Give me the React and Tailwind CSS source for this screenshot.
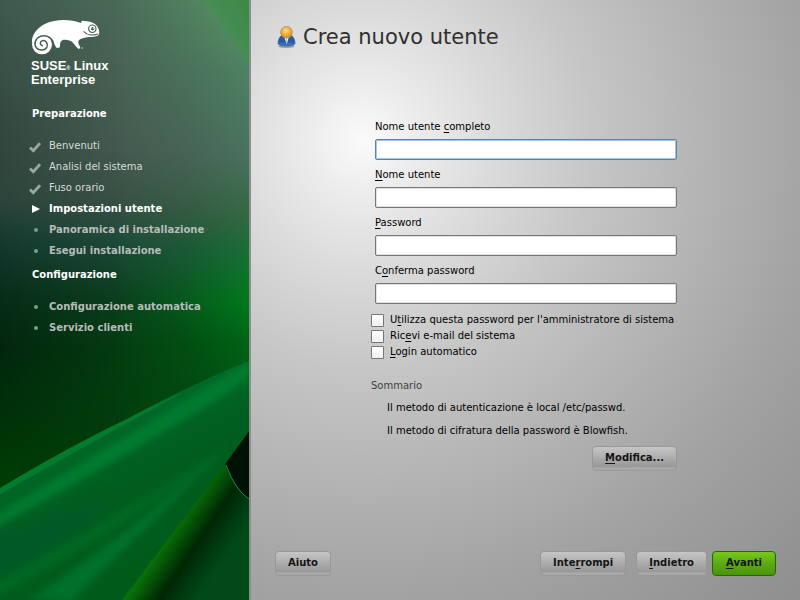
import React from "react";

function Backdrop() {
  return (
    <svg
      className="absolute inset-0 h-full w-full"
      viewBox="0 0 249 600"
      preserveAspectRatio="none"
      aria-hidden="true"
    >
      <defs>
        <linearGradient id="skyLeft" gradientUnits="userSpaceOnUse" x1="0" y1="0" x2="0" y2="480">
          <stop offset="0" stopColor="#3f5a4f" />
          <stop offset="0.27" stopColor="#33483f" />
          <stop offset="0.42" stopColor="#2c443b" />
          <stop offset="0.5" stopColor="#163a30" />
          <stop offset="0.62" stopColor="#082c18" />
          <stop offset="0.73" stopColor="#02260d" />
          <stop offset="0.84" stopColor="#012f0a" />
          <stop offset="1" stopColor="#013c04" />
        </linearGradient>
        <linearGradient id="skyMiddle" gradientUnits="userSpaceOnUse" x1="0" y1="0" x2="0" y2="480">
          <stop offset="0" stopColor="#4b6a58" />
          <stop offset="0.31" stopColor="#45594f" />
          <stop offset="0.42" stopColor="#385044" />
          <stop offset="0.52" stopColor="#1a4836" />
          <stop offset="0.62" stopColor="#0b3f1e" />
          <stop offset="0.73" stopColor="#043c10" />
          <stop offset="1" stopColor="#003e0a" />
        </linearGradient>
        <linearGradient id="skyRight" gradientUnits="userSpaceOnUse" x1="0" y1="0" x2="0" y2="480">
          <stop offset="0" stopColor="#569a66" />
          <stop offset="0.15" stopColor="#4d8262" />
          <stop offset="0.33" stopColor="#49705e" />
          <stop offset="0.45" stopColor="#336841" />
          <stop offset="0.52" stopColor="#1a6e36" />
          <stop offset="0.63" stopColor="#007a1c" />
          <stop offset="0.71" stopColor="#006414" />
          <stop offset="0.8" stopColor="#005a14" />
        </linearGradient>
        <linearGradient id="fadeMiddle" x1="0" y1="0" x2="1" y2="0">
          <stop offset="0" stopColor="#000" />
          <stop offset="0.5" stopColor="#fff" />
        </linearGradient>
        <linearGradient id="fadeRight" x1="0" y1="0" x2="1" y2="0">
          <stop offset="0.45" stopColor="#000" />
          <stop offset="0.75" stopColor="#777" />
          <stop offset="1" stopColor="#fff" />
        </linearGradient>
        <mask id="middleMask">
          <rect width="249" height="600" fill="url(#fadeMiddle)" />
        </mask>
        <mask id="rightMask">
          <rect width="249" height="600" fill="url(#fadeRight)" />
        </mask>
        <linearGradient id="corner" gradientUnits="userSpaceOnUse" x1="212" y1="30" x2="249" y2="5">
          <stop offset="0" stopColor="#4a9058" />
          <stop offset="1" stopColor="#3c8848" />
        </linearGradient>
        <linearGradient id="leaf" gradientUnits="userSpaceOnUse" x1="80" y1="440" x2="160" y2="600">
          <stop offset="0" stopColor="#00682a" />
          <stop offset="0.3" stopColor="#005e20" />
          <stop offset="1" stopColor="#005a18" />
        </linearGradient>
        <linearGradient id="fold" gradientUnits="userSpaceOnUse" x1="172" y1="532" x2="222" y2="566">
          <stop offset="0" stopColor="#087008" />
          <stop offset="0.2" stopColor="#045006" />
          <stop offset="0.45" stopColor="#002604" />
          <stop offset="0.75" stopColor="#003c10" />
          <stop offset="1" stopColor="#004a18" />
        </linearGradient>
        <filter id="soft" x="-10%" y="-10%" width="120%" height="120%">
          <feGaussianBlur stdDeviation="3" />
        </filter>
        <filter id="softer" x="-30%" y="-30%" width="160%" height="160%">
          <feGaussianBlur stdDeviation="9" />
        </filter>
        <clipPath id="leafClip">
          <path d="M0 488 Q70 446 125 420 Q200 380 249 361 V431 L225 464 Q175 530 122 600 H0Z" />
        </clipPath>
      </defs>
      <rect width="249" height="600" fill="url(#skyLeft)" />
      <rect width="249" height="600" fill="url(#skyMiddle)" mask="url(#middleMask)" />
      <rect width="249" height="600" fill="url(#skyRight)" mask="url(#rightMask)" />
      <path d="M203 0 H249 V64 Q226 28 203 0Z" fill="url(#corner)" />
      <path d="M225 464 L249 431 V600 H110Z" fill="url(#fold)" />
      <path d="M225 464 Q235 490 249 499 V431Z" fill="#001203" />
      <path d="M226 465 Q235 490 249 499" fill="none" stroke="#159048" strokeWidth="1" />
      <path d="M0 488 Q70 446 125 420 Q200 380 249 361 V431 L225 464 Q175 530 122 600 H0Z" fill="url(#leaf)" />
      <g clipPath="url(#leafClip)">
        <path d="M-10 540 Q60 510 110 500 Q60 560 -10 585Z" fill="#005a28" filter="url(#softer)" />
        <g filter="url(#soft)">
          <path d="M-10 518 Q120 440 255 358 L255 376 Q130 455 -10 530Z" fill="#007a2e" />
          <path d="M-10 586 Q110 520 235 442 Q140 520 -10 600Z" fill="#006820" />
          <path d="M30 600 Q120 540 225 450 Q150 525 72 600Z" fill="#00702a" />
        </g>
        <path d="M0 488 Q70 446 125 420 Q165 399 182 393 Q110 432 0 494Z" fill="#007c2c" />
        <path d="M231 392 L249 371 V388Z" fill="#006a24" opacity="0.6" />
      </g>
    </svg>
  );
}

function Chameleon() {
  return (
    <svg className="h-9 w-[69px]" viewBox="93 57 207 108" aria-hidden="true">
      <path
        d="M96 132 C93 106 110 84 136 71 C168 56 212 57 243 69 C245 65 244 63 248 62 C256 63 264 63 272 66 C284 69 293 77 296 88 C299 97 298 104 293 107 C283 112 270 110 261 112 C252 114 243 116 237 120 C233 125 236 134 240 140 L240 145 L236 147 C230 143 225 134 219 128 C211 120 198 118 188 120 C181 124 179 133 180 139 L178 143 L169 143 C165 138 164 131 158 123 L140 112 L100 122Z"
        fill="#fff"
      />
      <circle cx="126" cy="133" r="30" fill="#fff" />
      <circle cx="246" cy="144" r="2" fill="#fff" />
      <path
        d="M160 128 C154 110 136 104 121 109 C105 115 101 133 109 143 C118 154 136 152 141 141 C145 130 137 120 127 122 C119 125 119 135 127 137"
        fill="none"
        stroke="#465e52"
        strokeWidth="4.500"
        strokeLinecap="round"
      />
      <circle cx="277" cy="86" r="11" fill="#fff" stroke="#465e52" strokeWidth="3.500" />
      <circle cx="278" cy="86" r="5" fill="#465e52" />
      <circle cx="280" cy="84" r="2" fill="#fff" />
      <path d="M251 94 C260 105 278 107 294 102" fill="none" stroke="#465e52" strokeWidth="3.500" />
    </svg>
  );
}

function StepMark({ state }) {
  if (state === "done") {
    return (
      <svg className="h-3 w-3 translate-y-px" viewBox="0 0 12 12" aria-hidden="true">
        <path d="M1 6.5 L4.3 9.8 L11 2.2" fill="none" stroke="#9aa8a1" strokeWidth="2.8" />
      </svg>
    );
  }
  if (state === "current") {
    return (
      <svg className="h-3 w-3" viewBox="0 0 12 12" aria-hidden="true">
        <path d="M3 2 L11 6 L3 10Z" fill="#fff" />
      </svg>
    );
  }
  return (
    <svg className="h-3 w-3" viewBox="0 0 12 12" aria-hidden="true">
      <circle cx="7" cy="6" r="2" fill="#7d9d8b" />
    </svg>
  );
}

const stepText = {
  done: "text-[#d5dcd8]",
  current: "font-bold text-white",
  todo: "font-bold text-[#b8bcb9]",
};

function StepGroup({ title, steps }) {
  return (
    <section>
      <h2 className="pl-8 font-bold leading-[21px] text-white">{title}</h2>
      <ol className="mt-[11px]">
        {steps.map((step) => (
          <li
            key={step.name}
            className="flex h-[21px] items-center gap-2 pl-[29px]"
            aria-current={step.state === "current" ? "step" : undefined}
          >
            <StepMark state={step.state} />
            <span className={stepText[step.state]}>{step.name}</span>
          </li>
        ))}
      </ol>
    </section>
  );
}

const preparation = [
  { name: "Benvenuti", state: "done" },
  { name: "Analisi del sistema", state: "done" },
  { name: "Fuso orario", state: "done" },
  { name: "Impostazioni utente", state: "current" },
  { name: "Panoramica di installazione", state: "todo" },
  { name: "Esegui installazione", state: "todo" },
];

const configuration = [
  { name: "Configurazione automatica", state: "todo" },
  { name: "Servizio clienti", state: "todo" },
];

function UserIcon() {
  return (
    <svg className="h-6 w-[21px]" viewBox="0 0 21 24" aria-hidden="true">
      <defs>
        <radialGradient id="head" cx="0.45" cy="0.35" r="0.6">
          <stop offset="0" stopColor="#ffd890" />
          <stop offset="0.6" stopColor="#f3ab3a" />
          <stop offset="1" stopColor="#d48f2c" />
        </radialGradient>
        <linearGradient id="coat" x1="0" y1="0" x2="0" y2="1">
          <stop offset="0" stopColor="#2c62ae" />
          <stop offset="0.6" stopColor="#2459a5" />
          <stop offset="1" stopColor="#4a80c4" />
        </linearGradient>
      </defs>
      <ellipse cx="11.5" cy="21.3" rx="8" ry="1.7" fill="#555" opacity="0.5" />
      <path d="M3 18.500 C3 14 5 11 8 9.500 H15 C18 11 20 14 20 18.500 C20 21.800 3 21.800 3 18.500Z" fill="url(#coat)" stroke="#3a5f95" strokeWidth="0.7" />
      <path d="M9.200 12 H13.800 L11.800 19Z" fill="#fff" />
      <path d="M11.300 13 H12 L12 17 L11.700 18 L11.300 17Z" fill="#8ea6c8" />
      <circle cx="11.500" cy="7.300" r="5.800" fill="url(#head)" stroke="#b08a58" strokeWidth="0.8" />
    </svg>
  );
}

// Marks the keyboard accelerator of a label: the letter between the two parts is underlined.
function Mnemonic({ before = "", letter, after }) {
  return (
    <span>
      {before}
      <span className="underline underline-offset-2">{letter}</span>
      {after}
    </span>
  );
}

function Field({ id, label, type = "text", active = false }) {
  return (
    <div className="flex flex-col gap-1">
      <label htmlFor={id} className="leading-4">
        <Mnemonic {...label} />
      </label>
      <input
        id={id}
        type={type}
        className={`h-[21px] w-full rounded-[2px] border bg-white px-1 outline-none ${
          active
            ? "border-[#5484b0] shadow-[inset_0_0_0_1px_#a9c4dc]"
            : "border-[#767676] shadow-[inset_0_0_0_1px_#e2e2e2]"
        }`}
      />
    </div>
  );
}

function Check({ id, label }) {
  return (
    <div className="flex h-4 items-center gap-[6px]">
      <input
        id={id}
        type="checkbox"
        className="h-[13px] w-[13px] appearance-none rounded-[1px] border border-[#767676] bg-linear-to-b from-white to-[#f0f0f0] checked:bg-[#5484b0]"
      />
      <label htmlFor={id}>
        <Mnemonic {...label} />
      </label>
    </div>
  );
}

function Button({ primary = false, type = "button", children }) {
  return (
    <button
      type={type}
      className={`h-[25px] rounded border px-3 pb-px font-bold text-[#141414] ${
        primary
          ? "min-w-16 border-[#1f6a0c] bg-linear-to-b from-[#78c91c] via-[#5caa12] to-[#4a940c]"
          : "border-[#989898] bg-linear-to-b from-[#c6c6c6] from-0% via-[#989898] via-85% to-[#a8a8a8] to-90%"
      }`}
    >
      {children}
    </button>
  );
}

export default function App() {
  return (
    <div className="flex min-h-screen font-['DejaVu_Sans','Noto_Sans',sans-serif] text-[10px] leading-4 text-black">
      <aside className="relative w-[249px] shrink-0 overflow-hidden bg-[#05351a]">
        <Backdrop />
        <div className="relative pt-[19px]">
          <div className="pl-[31px]">
            <Chameleon />
            <p className="mt-1 font-['Liberation_Sans',Arial,sans-serif] text-[13px] font-bold leading-[14px] text-white">
              SUSE<span className="text-[5px] leading-none">®</span> Linux
              <br />
              Enterprise
            </p>
          </div>
          <nav className="mt-4 flex flex-col gap-[3px]" aria-label="Installazione">
            <StepGroup title="Preparazione" steps={preparation} />
            <StepGroup title="Configurazione" steps={configuration} />
          </nav>
        </div>
      </aside>

      <main className="flex flex-1 flex-col border-l-2 border-[#8c8c8c] bg-[radial-gradient(circle_at_112px_140px,#fafafa_0px,#ebebeb_60px,#dadada_135px,#c6c6c6_230px,#b4b4b4_340px,#a2a2a2_460px,#8e8e8e_640px)] px-6 pb-6 pt-6">
        <header className="flex items-center gap-[7px]">
          <UserIcon />
          <h1 className="text-[21px] leading-[26px] text-[#303030]">Crea nuovo utente</h1>
        </header>

        <form className="mx-auto mt-[69px] w-[309px] pr-[3px]">
          <div className="flex flex-col gap-[7px] pl-1">
            <Field id="fullname" label={{ before: "Nome utente ", letter: "c", after: "ompleto" }} active />
            <Field id="username" label={{ letter: "N", after: "ome utente" }} />
            <Field id="password" type="password" label={{ letter: "P", after: "assword" }} />
            <Field id="confirm" type="password" label={{ before: "C", letter: "o", after: "nferma password" }} />
          </div>
          <div className="mt-2">
            <Check
              id="admin"
              label={{ before: "U", letter: "t", after: "ilizza questa password per l'amministratore di sistema" }}
            />
            <Check id="mail" label={{ before: "Ric", letter: "e", after: "vi e-mail del sistema" }} />
            <Check id="login" label={{ letter: "L", after: "ogin automatico" }} />
          </div>
          <h2 className="mt-[18px] text-[#404040]">Sommario</h2>
          <div className="mt-[6px] flex flex-col gap-[7px] pl-4">
            <p>Il metodo di autenticazione è local /etc/passwd.</p>
            <p>Il metodo di cifratura della password è Blowfish.</p>
          </div>
          <div className="mt-[7px] flex justify-end">
            <Button>
              <Mnemonic letter="M" after="odifica..." />
            </Button>
          </div>
        </form>

        <footer className="mt-auto flex items-center pt-6">
          <Button>Aiuto</Button>
          <div className="ml-auto flex gap-[10px]">
            <Button>
              <Mnemonic before="Inte" letter="r" after="rompi" />
            </Button>
            <div className="flex gap-[5px]">
              <Button>
                <Mnemonic letter="I" after="ndietro" />
              </Button>
              <Button primary type="submit">
                <Mnemonic letter="A" after="vanti" />
              </Button>
            </div>
          </div>
        </footer>
      </main>
    </div>
  );
}
